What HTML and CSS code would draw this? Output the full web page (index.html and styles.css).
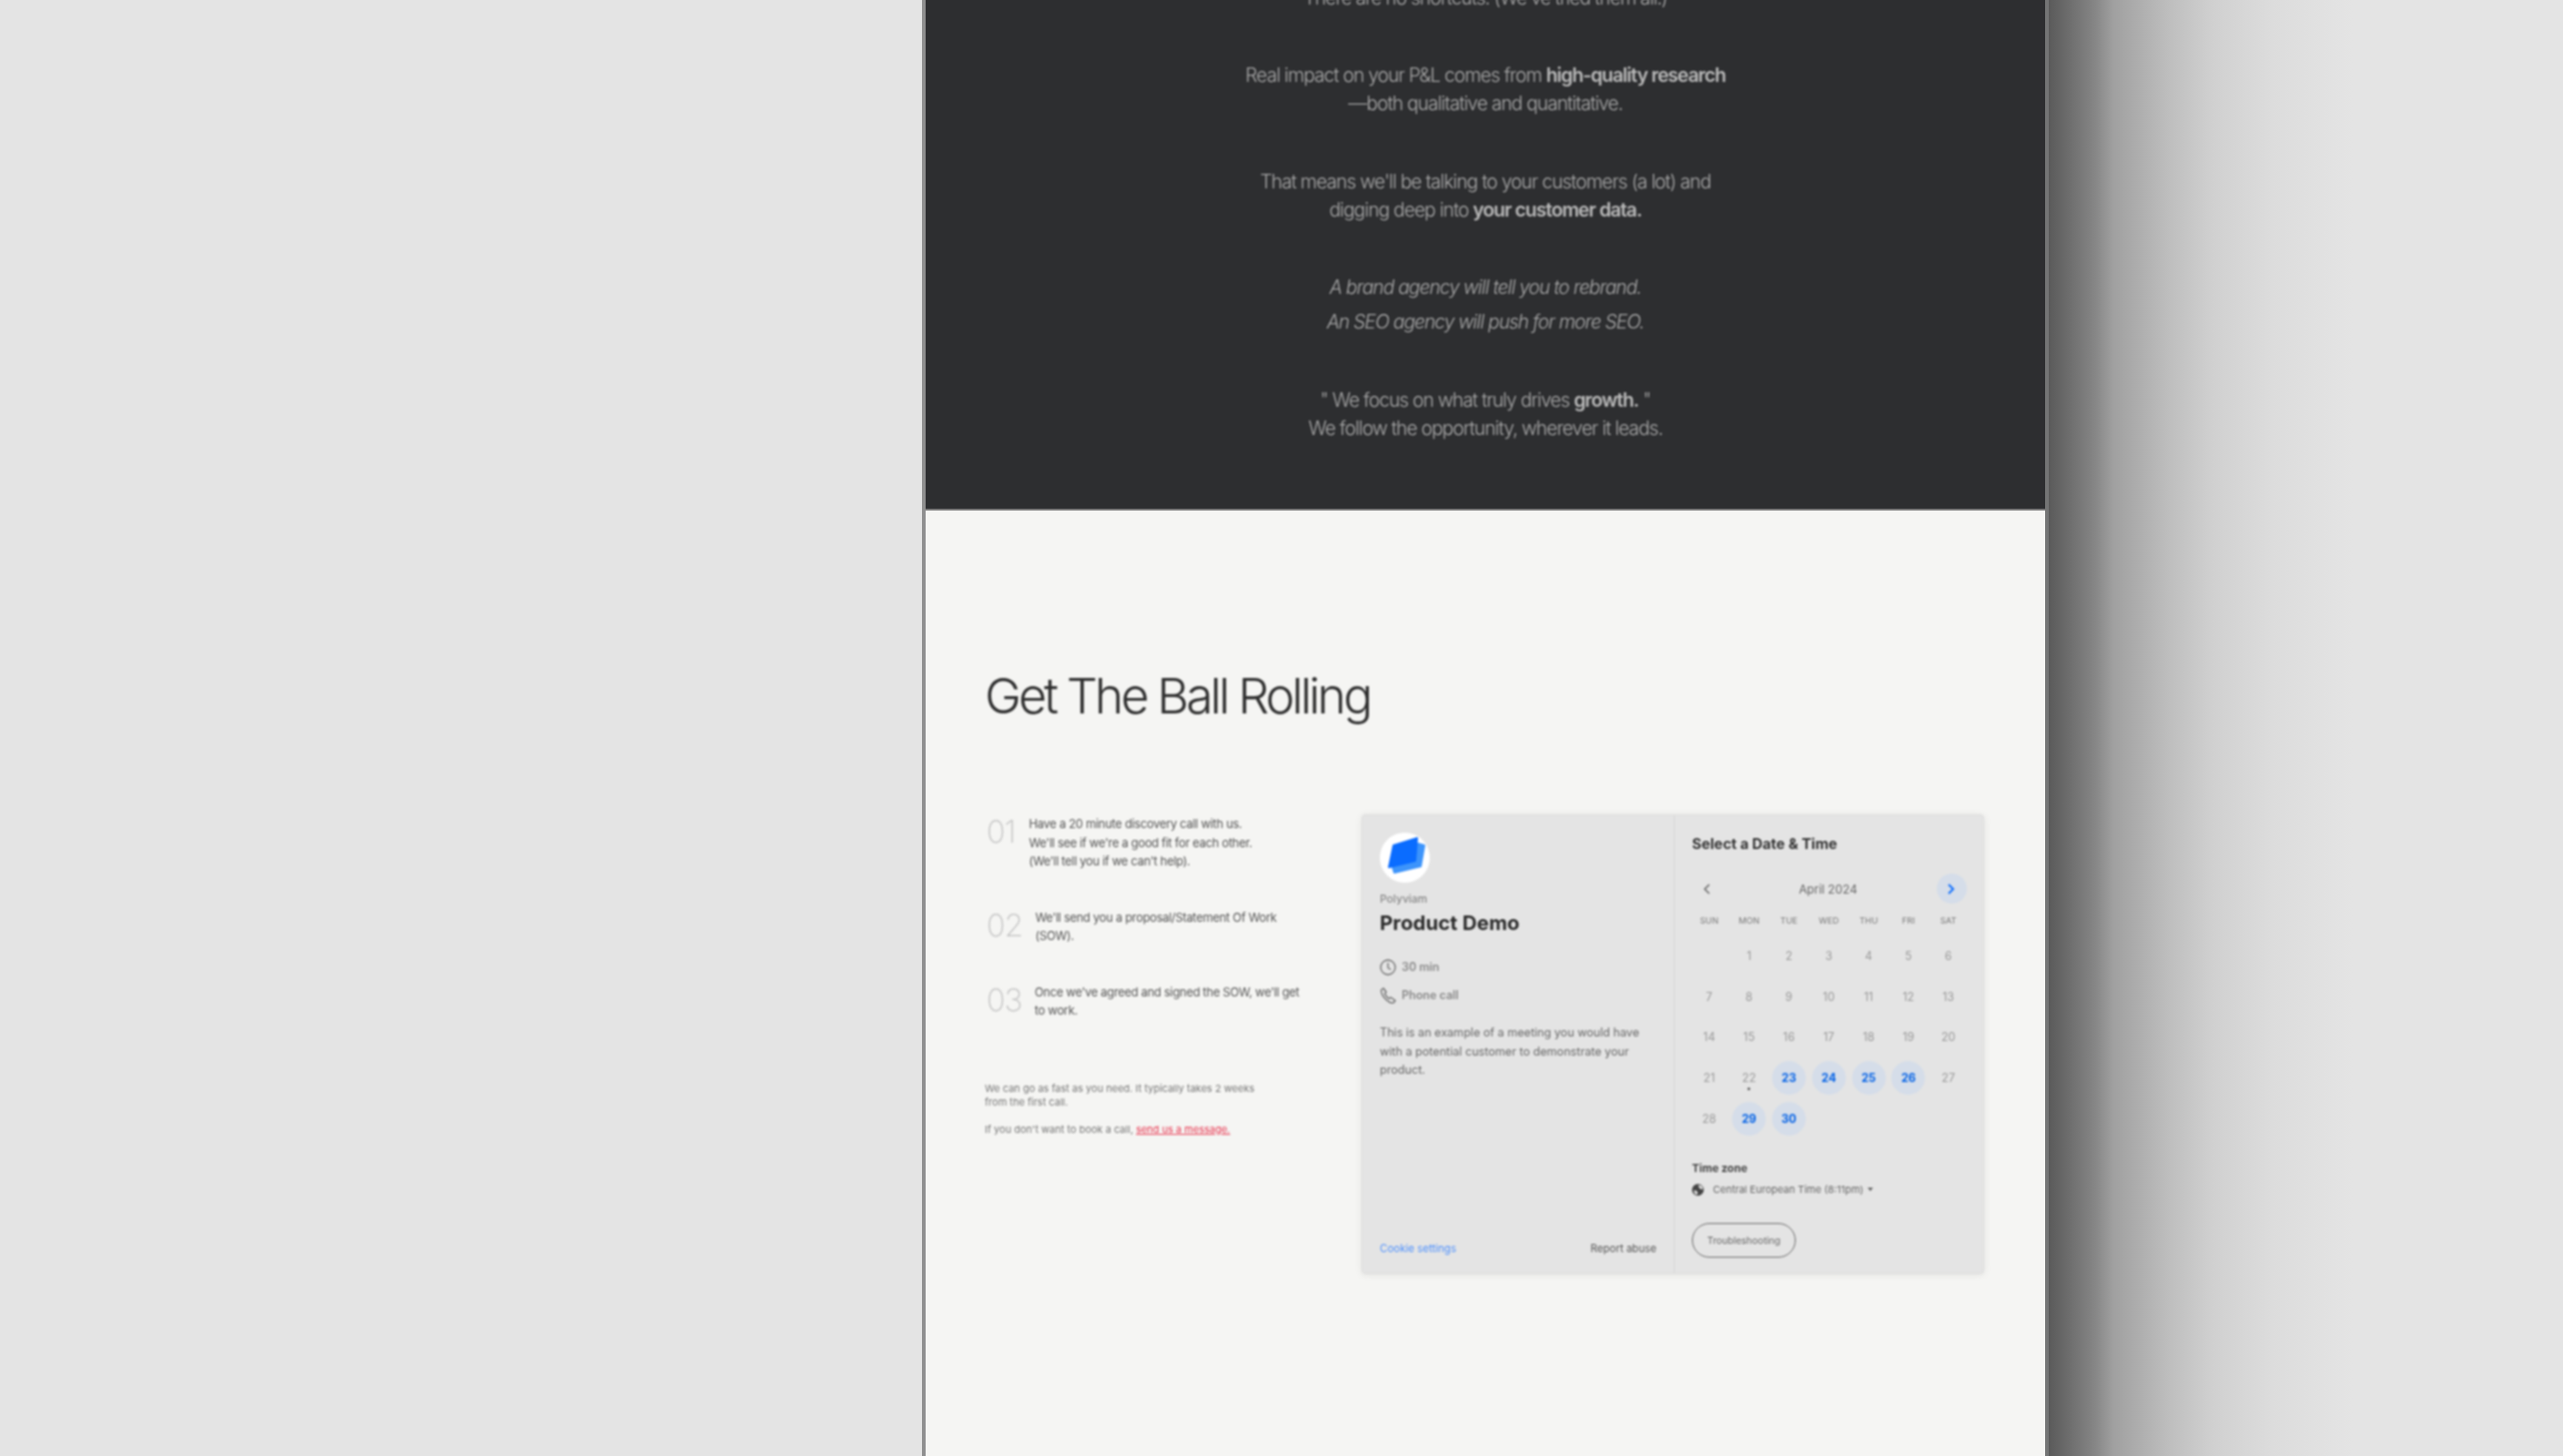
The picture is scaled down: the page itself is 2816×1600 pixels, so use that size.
FILE: index.html
```html
<!DOCTYPE html>
<html lang="en">
<head>
    <meta charset="UTF-8">
    <meta name="viewport" content="width=device-width, initial-scale=1.0">
    <title>Get The Ball Rolling</title>
    <link rel="stylesheet" href="styles.css">
</head>
<body>
    <div class="stage">
        <main class="page">
            <section class="dark">
                <p>There are no shortcuts. (We've tried them all.)</p>
                <p>Real impact on your P&amp;L comes from <b>high-quality research</b><br>—both qualitative and quantitative.</p>
                <p class="before-quote">That means we'll be talking to your customers (a lot) and<br>digging deep into <b>your customer data.</b></p>
                <p class="quote">A brand agency will tell you to rebrand.<br>An SEO agency will push for more SEO.</p>
                <p>" We focus on what truly drives <b>growth.</b> "<br>We follow the opportunity, wherever it leads.</p>
            </section>

            <section class="light">
                <h1>Get The Ball Rolling</h1>
                <div class="columns">
                    <div class="intro">
                        <div class="step">
                            <span class="num">01</span>
                            <p>Have a 20 minute discovery call with us.<br>We'll see if we're a good fit for each other.<br>(We'll tell you if we can't help).</p>
                        </div>
                        <div class="step step-two">
                            <span class="num">02</span>
                            <p>We'll send you a proposal/Statement Of Work<br>(SOW).</p>
                        </div>
                        <div class="step step-three">
                            <span class="num">03</span>
                            <p>Once we've agreed and signed the SOW, we'll get<br>to work.</p>
                        </div>
                        <p class="note">We can go as fast as you need.  It typically takes 2 weeks<br>from the first call.</p>
                        <p class="note note-last">If you don't want to book a call, <a href="#">send us a message.</a></p>
                    </div>

                    <div class="card">
                        <div class="event">
                            <div class="logo">
                                <svg width="55" height="55" viewBox="0 0 55 55" stroke-linejoin="round" stroke-width="2">
                                    <path fill="#3d94fb" stroke="#3d94fb" d="M42 12 L49 14 L45 37 L16 44 L14 38 Z"/>
                                    <path fill="#0a6cff" stroke="#0a6cff" d="M15 14 L41 6 L39 31 L10 38 Z"/>
                                </svg>
                            </div>
                            <div class="org">Polyviam</div>
                            <h2>Product Demo</h2>
                            <div class="meta meta-time">
                                <svg width="18" height="18" viewBox="0 0 18 18" fill="none" stroke="#666" stroke-width="1.3">
                                    <circle cx="9" cy="9" r="8"/>
                                    <path d="M9 4v5.5l3 2"/>
                                </svg>
                                30 min
                            </div>
                            <div class="meta meta-phone">
                                <svg width="18" height="18" viewBox="0 0 18 18" fill="none" stroke="#666" stroke-width="1.3" stroke-linejoin="round">
                                    <path d="M1.5 3 L4 1 L7 5 L5.5 7 Q6.5 9.5 10 12.5 L12 11 L17 14.5 L15 17 Q12 18 7.5 14 Q1 8 1.5 3 Z"/>
                                </svg>
                                Phone call
                            </div>
                            <p class="desc">This is an example of a meeting you would have with a potential customer to demonstrate your product.</p>
                            <div class="event-foot">
                                <a href="#">Cookie settings</a>
                                <span>Report abuse</span>
                            </div>
                        </div>

                        <div class="picker">
                            <h3>Select a Date &amp; Time</h3>
                            <div class="month">
                                <div class="prev">
                                    <svg width="10" height="14" viewBox="0 0 10 14" fill="none" stroke="#666" stroke-width="1.6"><path d="M8 2 L3 7 L8 12"/></svg>
                                </div>
                                <span>April 2024</span>
                                <div class="next">
                                    <svg width="10" height="14" viewBox="0 0 10 14" fill="none" stroke="#0a6cff" stroke-width="2"><path d="M2 2 L7 7 L2 12"/></svg>
                                </div>
                            </div>
                            <div class="weekdays">
                                <span>SUN</span><span>MON</span><span>TUE</span><span>WED</span><span>THU</span><span>FRI</span><span>SAT</span>
                            </div>
                            <div class="days">
                                <span></span><span>1</span><span>2</span><span>3</span><span>4</span><span>5</span><span>6</span>
                                <span>7</span><span>8</span><span>9</span><span>10</span><span>11</span><span>12</span><span>13</span>
                                <span>14</span><span>15</span><span>16</span><span>17</span><span>18</span><span>19</span><span>20</span>
                                <span>21</span><span class="today">22</span><span class="open">23</span><span class="open">24</span><span class="open">25</span><span class="open">26</span><span>27</span>
                                <span>28</span><span class="open">29</span><span class="open">30</span>
                            </div>
                            <div class="tz-label">Time zone</div>
                            <div class="tz">
                                <svg width="13" height="13" viewBox="0 0 13 13">
                                    <circle cx="6.5" cy="6.5" r="6.5" fill="#444"/>
                                    <path fill="#e4e4e4" d="M7 1 L11 2.5 L12 6 L9 5.5 L7.5 3.5 Z M2 7 L5 7.5 L6.5 10 L5 12 L3 10.5 Z"/>
                                </svg>
                                <span>Central European Time (8:11pm)</span>
                                <i class="caret"></i>
                            </div>
                            <button class="trouble">Troubleshooting</button>
                        </div>
                    </div>
                </div>
            </section>
        </main>
        <div class="shade"></div>
    </div>
</body>
</html>
```

FILE: styles.css
```css
html, body {
    margin: 0;
    height: 100%;
}

body {
    background: #e4e4e4;
    overflow: hidden;
    font-family: "Inter", "Liberation Sans", sans-serif;
}

.stage {
    display: flex;
    height: 1600px;
    padding-left: 1013px;
}

.page {
    width: 1230px;
    height: 1600px;
    border-left: 4px solid #8f8f8f;
    border-right: 4px solid #747575;
    overflow: hidden;
    background: #f5f5f3;
}

/* Right hand window shadow */
.shade {
    width: 340px;
    background: linear-gradient(90deg, #5a5a5a 0, #868686 51px, #a0a0a0 71px, #bebebe 132px, #d0d0d0 180px, #dcdcdc 245px, #e4e4e4 334px);
}

/* The page is a soft photo of a page */
.dark p,
h1,
.columns {
    filter: blur(0.8px);
}

/* Dark block */
.dark {
    box-sizing: border-box;
    background: #2d2e30;
    border-bottom: 2px solid #777;
    height: 561px;
    padding-top: 1px;
    text-align: center;
    color: #ababab;
    font-size: 21px;
    font-weight: 300;
    line-height: 31px;
    letter-spacing: -1px;
}

.dark p {
    margin: 0 0 55px;
}

.dark p:first-child {
    margin-top: -19px;
    margin-bottom: 54px;
}

.dark .before-quote {
    margin-bottom: 51px;
}

.dark b {
    font-weight: 600;
    color: #bcbcbc;
}

.dark .quote {
    font-style: italic;
    line-height: 38px;
    margin-bottom: 51px;
}

/* Light block */
.light {
    padding: 0 0 0 65px;
}

h1 {
    margin: 0;
    padding-top: 168px;
    font-size: 54px;
    font-weight: 300;
    line-height: 72px;
    letter-spacing: -3.25px;
    color: #2e2e2e;
}

.columns {
    display: flex;
    margin-top: 94px;
}

.intro {
    width: 414px;
}

.step {
    display: flex;
    gap: 15px;
    padding-left: 2px;
    color: #555;
    font-size: 13px;
    line-height: 20.5px;
    letter-spacing: -0.33px;
}

.step p {
    margin: 0;
}

.step-two,
.step-three {
    margin-top: 41px;
    gap: 14px;
}

.num {
    font-size: 34px;
    font-weight: 200;
    line-height: 38px;
    color: #c4c4c4;
    letter-spacing: -1px;
}

.note {
    margin: 68px 0 0;
    font-size: 11px;
    line-height: 15px;
    color: #777;
}

.note-last {
    margin-top: 15px;
}

.note a {
    color: #e8344e;
}

/* Booking widget */
.card {
    display: flex;
    width: 684px;
    height: 505px;
    box-sizing: border-box;
    background: #e4e4e4;
    border: 1px solid #dcdcdc;
    border-radius: 4px;
    box-shadow: 0 1px 8px rgba(0, 0, 0, 0.08);
}

.event {
    display: flex;
    flex-direction: column;
    width: 343px;
    box-sizing: border-box;
    padding: 19px 19px 20px;
    border-right: 1px solid #d4d4d4;
}

.logo {
    width: 55px;
    height: 55px;
    flex: none;
    border-radius: 50%;
    background: #fff;
}

.org {
    margin-top: 10px;
    font-size: 12px;
    line-height: 16px;
    font-weight: 500;
    color: #888;
}

h2 {
    margin: 4px 0 0;
    font-size: 22px;
    line-height: 28px;
    font-weight: 700;
    color: #2a2a2a;
    letter-spacing: 0.1px;
}

.meta {
    display: flex;
    align-items: center;
    gap: 6px;
    font-size: 12.5px;
    line-height: 18px;
    font-weight: 600;
    color: #888;
}

.meta-time {
    margin-top: 26px;
}

.meta-phone {
    margin-top: 13px;
}

.desc {
    margin: 22px 0 0;
    font-size: 12.6px;
    line-height: 20.5px;
    color: #666;
}

.event-foot {
    display: flex;
    justify-content: space-between;
    margin-top: auto;
    font-size: 11.5px;
    line-height: 14px;
    color: #555;
}

.event-foot a {
    color: #4d90fe;
    text-decoration: none;
}

.picker {
    flex: 1;
    padding: 21px 0 0 19px;
}

h3 {
    margin: 0;
    font-size: 16px;
    line-height: 20px;
    font-weight: 700;
    color: #333;
}

.month {
    display: flex;
    align-items: center;
    justify-content: space-between;
    width: 305px;
    height: 33px;
    margin: 23px 0 0 -3px;
    font-size: 13px;
    color: #666;
}

.prev {
    display: flex;
    width: 33px;
    box-sizing: border-box;
    padding-left: 14px;
}

.next {
    display: flex;
    align-items: center;
    justify-content: center;
    width: 33px;
    height: 33px;
    border-radius: 50%;
    background: #d5dde9;
}

.weekdays,
.days {
    display: grid;
    grid-template-columns: repeat(7, 43.8px);
    margin-left: -3px;
    text-align: center;
}

.weekdays {
    margin-top: 11px;
    font-size: 9.5px;
    line-height: 16px;
    color: #777;
}

.days {
    margin-top: 8px;
    grid-auto-rows: 44.7px;
    font-size: 12.5px;
    color: #999;
}

.days span {
    display: flex;
    align-items: center;
    justify-content: center;
    position: relative;
}

.days .open {
    color: #0060e6;
    font-weight: 700;
    isolation: isolate;
}

.days .open::before {
    content: "";
    position: absolute;
    width: 37px;
    height: 37px;
    border-radius: 50%;
    background: #d5dde9;
    z-index: -1;
}

.days .today::after {
    content: "";
    position: absolute;
    bottom: 9px;
    left: 50%;
    width: 3px;
    height: 3px;
    margin-left: -1.5px;
    border-radius: 50%;
    background: #555;
}

.tz-label {
    margin-top: 25px;
    font-size: 12px;
    line-height: 16px;
    font-weight: 700;
    color: #444;
}

.tz {
    display: flex;
    align-items: center;
    margin-top: 7px;
    font-size: 11px;
    line-height: 16px;
    color: #666;
}

.tz svg {
    margin-right: 10px;
}

.caret {
    width: 0;
    height: 0;
    margin-left: 4px;
    border-left: 3.5px solid transparent;
    border-right: 3.5px solid transparent;
    border-top: 4px solid #666;
}

.trouble {
    display: block;
    width: 114px;
    height: 38px;
    margin-top: 29px;
    padding: 0;
    background: transparent;
    border: 1px solid #666;
    border-radius: 19px;
    font: 10.5px "Inter", "Liberation Sans", sans-serif;
    color: #666;
}
```
